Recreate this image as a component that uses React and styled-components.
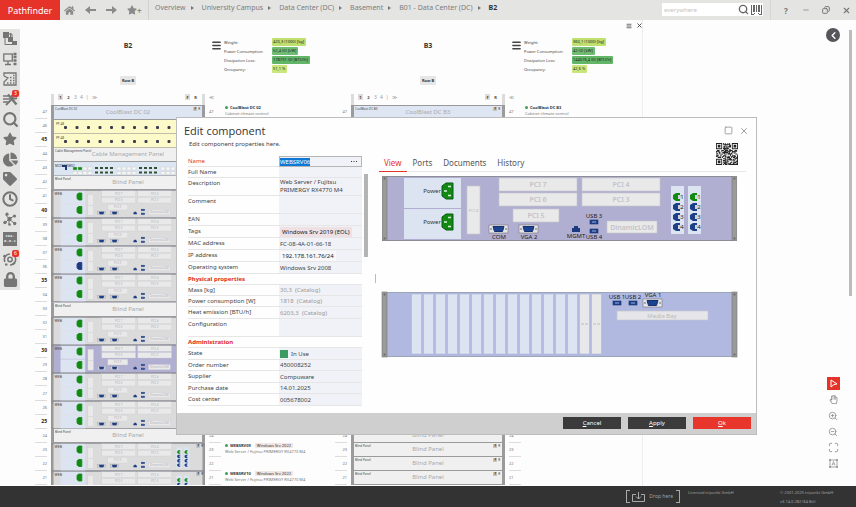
import { useEffect, useRef } from "react";
import styled, { createGlobalStyle } from "styled-components";
import {
    FaHome,
    FaStar,
    FaChartPie,
    FaTag,
    FaLock,
    FaRegHandPaper,
} from "react-icons/fa";
import {
    ChevronLeft,
    Clock,
    Copy,
    Maximize,
    Menu,
    Minus,
    Search,
    Square,
    X,
    ZoomIn,
    ZoomOut,
} from "lucide-react";

const GlobalStyle = createGlobalStyle`
  * {
    box-sizing: border-box;
  }
  body {
    margin: 0;
    background-color: #fdfdfd;
    color: #444;
    font-family: "Noto Sans", "Open Sans", sans-serif;
    font-size: 6px;
  }
  button, input, textarea {
    font: inherit;
    color: inherit;
    border: 0;
    padding: 0;
    margin: 0;
    background: none;
  }
  svg {
    display: block;
  }
`;

const Page = styled.div`
  position: relative;
  display: flex;
  flex-direction: column;
  height: 100vh;
  overflow: hidden;
`;

/* top bar */

const TopBar = styled.header`
  display: flex;
  flex: none;
  height: 20px;
  background-color: #e4e4e2;
`;

const Brand = styled.div`
  width: 60px;
  background-color: #e6332a;
  color: #fff;
  font-size: 9px;
  line-height: 21px;
  text-align: center;
`;

const NavButtons = styled.nav`
  display: flex;
  align-items: center;
  gap: 10px;
  width: 89px;
  padding-left: 4px;
  border-right: 1px solid #d2d2d0;
  color: #8a8a8a;
  font-size: 8px;
  font-weight: bold;
`;

const IconButton = styled.button`
  display: flex;
  align-items: center;
  justify-content: center;
  min-width: 10px;
`;

const Crumbs = styled.div`
  display: flex;
  flex: 1;
  padding-left: 6px;
  font-size: 7px;
  line-height: 15px;
  white-space: nowrap;
  a {
    color: #7d7d7d;
    text-decoration: none;
  }
  a::after {
    content: "";
    display: inline-block;
    margin: 0 8px 0 5px;
    border: 2px solid transparent;
    border-left: 3px solid #777;
    border-right: 0;
  }
  strong {
    color: #333;
  }
`;

const SearchBox = styled.label`
  display: flex;
  align-items: center;
  gap: 2px;
  width: 101px;
  height: 13px;
  margin: 3px 7px 0 0;
  padding: 0 1px 0 2px;
  background-color: #fff;
  color: #666;
  input {
    flex: 1;
    min-width: 0;
    font-size: 6px;
    outline: none;
  }
  input::placeholder {
    color: #c2c2c2;
  }
`;

const WindowButtons = styled.div`
  display: flex;
  align-items: center;
  gap: 10px;
  padding: 0 5px 0 10px;
  border-left: 1px solid #d6d6d4;
  color: #777;
  font-size: 8px;
`;

/* left icon bar */

const Main = styled.main`
  display: flex;
  flex: 1;
  min-height: 0;
`;

const SideBar = styled.aside`
  display: flex;
  flex-direction: column;
  align-self: flex-start;
  width: 20px;
  margin-top: 9px;
  padding-bottom: 1px;
  background-color: #e4e4e2;
  color: #757575;
`;

const SideItem = styled.button`
  position: relative;
  display: flex;
  align-items: center;
  justify-content: center;
  height: 20px;
`;

const Badge = styled.span`
  position: absolute;
  top: 1px;
  right: 1px;
  width: 7px;
  height: 7px;
  border-radius: 2px;
  background-color: #e6332a;
  color: #fff;
  font-size: 5px;
  line-height: 7px;
`;

const AddressIcon = styled.span`
  width: 14px;
  height: 14px;
  padding-top: 2px;
  background-color: #757575;
  color: #eee;
  font-family: "Liberation Mono", monospace;
  font-size: 4px;
  font-weight: bold;
  line-height: 5px;
  text-align: center;
`;

/* rack canvas */

const Canvas = styled.section`
  display: flex;
  flex: none;
  width: 623px;
  padding-left: 15px;
  overflow: hidden;
  border-right: 1px solid #eeeeee;
`;

const Section = styled.article`
  display: flex;
  flex: none;
  flex-direction: column;
  width: 300px;
`;

const SectionTop = styled.div`
  display: flex;
  height: 74px;
  padding: 17px 0 0 16px;
`;

const RackTitle = styled.div`
  display: flex;
  flex-direction: column;
  align-items: center;
  justify-content: space-between;
  width: 154px;
  padding-bottom: 9px;
  h2 {
    margin: 0;
    color: #333;
    font-size: 7px;
    line-height: 18px;
  }
  span {
    padding: 0 2px;
    border-radius: 1px;
    background-color: #e6e6e6;
    color: #333;
    font-size: 4px;
    font-weight: bold;
    line-height: 9px;
  }
`;

const MenuButton = styled.button`
  align-self: flex-start;
  margin: 3px 2px 0 6px;
`;

const Stats = styled.dl`
  display: grid;
  grid-template-columns: 48px auto;
  grid-auto-rows: 9px;
  align-content: start;
  margin: 1px 0 0;
  font-size: 4px;
  line-height: 9px;
  white-space: nowrap;
  dt {
    color: #444;
  }
  dd {
    display: flex;
    margin: 0;
  }
`;

const StatValue = styled.span`
  height: 8px;
  padding: 0 2px 0 1px;
  border-radius: 1px;
  background-color: ${(props) => props.$color};
  color: #222;
  line-height: 8px;
`;

const RackGrid = styled.div`
  display: grid;
  grid-template-columns: 12px 154px 12px 1fr;
  column-gap: 4px;
`;

const RackTools = styled(RackGrid)`
  height: 11px;
  color: #999;
  font-size: 5px;
  line-height: 7px;
`;

const RackHead = styled.div`
  grid-column: 2;
  display: flex;
  justify-content: space-between;
  border: 0 solid #dcdcdc;
  border-width: 0 3px;
  padding: 0 4px;
  div {
    display: flex;
    gap: 3px;
  }
  b {
    width: 5px;
    color: #444;
    font-size: 4px;
    text-align: center;
  }
  b:first-child {
    height: 6px;
    background-color: #ddd;
  }
`;

const RackBody = styled(RackGrid)`
  grid-template-rows: minmax(0, 1fr);
  flex: 1;
  min-height: 0;
  padding-bottom: 1px;
`;

const UnitRows = styled.div`
  display: grid;
  grid-template-rows: repeat(27, minmax(0, 1fr));
  min-height: 0;
`;

const RulerCell = styled.span`
  display: flex;
  align-items: center;
  justify-content: ${(props) => (props.$right ? "flex-start" : "flex-end")};
  border-bottom: 1px solid #dcdcdc;
  color: ${(props) => (props.$major ? "#222" : "#777")};
  font-size: ${(props) => (props.$major ? 5 : 4)}px;
  font-weight: ${(props) => (props.$major ? "bold" : "normal")};
  line-height: 7px;
`;

const Rack = styled(UnitRows)`
  border-top: 1px solid #999;
`;

const Unit = styled.div`
  position: relative;
  grid-row: span ${(props) => props.$span || 1};
  border: 0 solid #9b9b9b;
  border-width: ${(props) => (props.$span || props.$bare ? "0" : "0 3px 1px")};
  background-color: ${(props) => props.$color || "#f0f0f0"};
  color: #a9a9a9;
  font-size: 6px;
  line-height: 13px;
  text-align: center;
  overflow: hidden;
`;

const UnitName = styled.small`
  position: absolute;
  top: 1px;
  left: 1px;
  color: #444;
  font-size: 3px;
  line-height: 4px;
`;

const UnitSide = styled.small`
  position: absolute;
  top: 1px;
  right: 2px;
  color: #333;
  font-size: 3px;
  line-height: 4px;
  b {
    display: inline-block;
    margin-right: 1px;
    padding: 0 1px;
    background-color: #c4c4c4;
  }
`;

const Notes = styled(UnitRows)`
  white-space: nowrap;
`;

const Note = styled.div`
  grid-row: ${(props) => props.$row};
  color: #777;
  font-size: 4px;
  line-height: 5px;
  div {
    display: flex;
    align-items: center;
    gap: 2px;
  }
  div::before {
    content: "";
    width: 3px;
    height: 3px;
    border-radius: 50%;
    background-color: #3c9c5c;
  }
  b {
    color: #333;
  }
  span {
    margin-left: 2px;
    padding: 0 2px;
    background-color: #f2e6e4;
    color: #333;
  }
  p {
    margin: 1px 0 0;
  }
`;

/* area on the right */

const SidePane = styled.section`
  display: flex;
  flex: 1;
  justify-content: flex-end;
  padding-top: 8px;
`;

const Tools = styled.div`
  display: flex;
  flex-direction: column;
  align-items: center;
  justify-content: space-between;
  width: 14px;
  margin-right: 9px;
  padding-bottom: 16px;
  color: #909090;
  > div {
    display: flex;
    flex-direction: column;
    gap: 3px;
  }
`;

const BackButton = styled(IconButton)`
  width: 14px;
  height: 14px;
  border-radius: 50%;
  background-color: #55555a;
  color: #fff;
`;

const ToolButton = styled(IconButton)`
  width: 13px;
  height: 13px;
  background-color: ${(props) => (props.$active ? "#e6332a" : "transparent")};
  color: ${(props) => (props.$active ? "#fff" : "#909090")};
`;

const PageScroll = styled.div`
  width: 3px;
  height: 58%;
  margin: 2px 4px 0 0;
  background-color: #bcbcba;
`;

const PanelButtons = styled.div`
  position: absolute;
  top: 22px;
  left: 624px;
  display: flex;
  color: #444;
`;

/* status bar */

const StatusBar = styled.footer`
  display: flex;
  flex: none;
  justify-content: flex-end;
  gap: 8px;
  height: 21px;
  background-color: #333;
  color: #a0a0a0;
  font-size: 4px;
  line-height: 9px;
  p {
    width: 84px;
    margin: 2px 0 0;
  }
  p:last-child {
    width: 76px;
  }
`;

const DropArea = styled.div`
  display: flex;
  align-items: center;
  gap: 4px;
  height: 13px;
  margin-top: 4px;
  padding: 0 6px 0 5px;
  background:
    linear-gradient(#aaa, #aaa) 0 0 / 3px 1px,
    linear-gradient(#aaa, #aaa) 0 100% / 3px 1px,
    linear-gradient(#aaa, #aaa) 100% 0 / 3px 1px,
    linear-gradient(#aaa, #aaa) 100% 100% / 3px 1px;
  background-repeat: no-repeat;
  border: 1px solid #aaa;
  border-width: 0 1px;
  font-size: 5px;
`;

/* dialog */

const Dialog = styled.section`
  position: absolute;
  top: 117px;
  right: 99px;
  bottom: 72px;
  left: 176px;
  display: flex;
  flex-direction: column;
  border: 1px solid #bdbdbd;
  background-color: #fefefe;
`;

const DialogHead = styled.header`
  display: flex;
  justify-content: space-between;
  height: 38px;
  padding: 5px 7px 0 7px;
  h1 {
    margin: 0;
    color: #333;
    font-family: "Open Sans", sans-serif;
    font-size: 11px;
    font-weight: normal;
    line-height: 16px;
  }
  p {
    margin: 0 0 0 5px;
    line-height: 10px;
  }
`;

const DialogButtons = styled.div`
  display: flex;
  align-items: flex-start;
  gap: 6px;
  padding-top: 3px;
  color: #8a8a8a;
`;

const QrCode = styled.svg`
  position: absolute;
  top: 25px;
  right: 18px;
  width: 22px;
  height: 22px;
`;

const DialogBody = styled.div`
  display: flex;
  flex: 1;
  min-height: 0;
  padding: 0 10px 0 11px;
`;

const Form = styled.form`
  flex: none;
  width: 174px;
  h3 {
    height: 11px;
    margin: 0;
    color: #e02b20;
    font-size: 6px;
    line-height: 11px;
    border-bottom: 1px solid #e6e6e6;
  }
`;

const rowHeights = { compact: 11, normal: 12, tall: 18 };

const Row = styled.div`
  display: grid;
  grid-template-columns: 91px 83px;
  height: ${(props) => rowHeights[props.$size]}px;
  border-bottom: 1px solid #e6e6e6;
  line-height: 10px;
  label {
    color: ${(props) => (props.$required ? "#e0402f" : "#444")};
  }
  input, textarea {
    min-width: 0;
    padding-left: 1px;
    color: ${(props) => (props.$muted ? "#999" : "#444")};
    line-height: 8px;
    outline: none;
    resize: none;
    overflow: hidden;
  }
`;

const Value = styled.div`
  display: flex;
  align-items: center;
  gap: 2px;
  background-color: #f1f2f7;
  white-space: nowrap;
  input, textarea {
    flex: 1;
    height: 100%;
  }
`;

const NameValue = styled(Value)`
  height: 11px;
  border: 1px solid #b5b5b5;
  input {
    padding-left: 0;
  }
  input::selection {
    background-color: #0f78d4;
    color: #fff;
  }
  button {
    width: 10px;
    color: #333;
  }
`;

const Chip = styled.span`
  margin-left: 1px;
  padding: 0 2px;
  background-color: ${(props) => props.$color};
  color: #222;
  line-height: 10px;
`;

const StateMark = styled.i`
  width: 8px;
  height: 8px;
  margin-left: 1px;
  background-color: #3a9c62;
`;

const FormScroll = styled.div`
  flex: none;
  width: 4px;
  height: 83px;
  margin: 18px 7px 0 2px;
  background-color: #b4b4b4;
`;

const Splitter = styled.div`
  flex: none;
  align-self: center;
  width: 1px;
  height: 9px;
  margin: 0 3px 12px 0;
  background-color: #bbb;
`;

const Views = styled.div`
  flex: 1;
  min-width: 0;
`;

const Tabs = styled.div`
  display: flex;
  gap: 1px;
  height: 16px;
  border-bottom: 1px solid #e8e8e8;
`;

const Tab = styled.button`
  height: 16px;
  padding: 0 5px 2px;
  border-bottom: 1px solid ${(props) => (props.$active ? "#e6332a" : "transparent")};
  color: ${(props) => (props.$active ? "#e6332a" : "#555")};
  font-size: 8px;
  line-height: 12px;
`;

const Devices = styled.div`
  display: flex;
  flex-direction: column;
  gap: 51px;
  padding: 4px 9px 0 3px;
`;

const DialogFoot = styled.footer`
  display: flex;
  justify-content: flex-end;
  gap: 7px;
  height: 21px;
  padding: 4px 5px;
  background-color: #cfcfcf;
`;

const ActionButton = styled.button`
  width: 58px;
  height: 12px;
  background-color: ${(props) => (props.$primary ? "#e8362c" : "#3b3b3b")};
  color: #fff;
  font-size: 6px;
  line-height: 12px;
`;

const DeviceSvg = styled.svg`
  width: 100%;
  height: auto;
  font-family: "Noto Sans", sans-serif;
  text-anchor: middle;
`;

const PciSlot = ({ x, y, width, height = 13, label }) => (
    <g>
        <rect x={x} y={y} width={width} height={height} fill="#e9e9ea" stroke="#c6c6cc" strokeWidth="0.6" />
        <text x={x + width / 2} y={y + height / 2 + 2.5} fontSize="7" fontWeight="600" fill="#c3c3c8">{label}</text>
    </g>
);

const PowerPlug = ({ y, color = "#108a10", small }) => (
    <g>
        <path
            d={`M64 ${y} h7 v16 h-7 l-4 -3 v-10 z`}
            fill={color}
            stroke={small ? color : "#0a5a14"}
            strokeWidth={small ? 2 : 1}
        />
        {!small && (
            <path d={`M66 ${y + 3.5} h3 M62 ${y + 8} h3 M66 ${y + 12.5} h3`} stroke="#dff0df" strokeWidth="1.4" />
        )}
    </g>
);

const VgaPort = ({ x, y }) => (
    <g>
        <rect x={x} y={y} width="19" height="8" fill="#e6e6ea" stroke="#777" strokeWidth="0.6" />
        <path d={`M${x + 4} ${y + 1.5} h11 l-1.5 5 h-8 z`} fill="#1d4390" stroke="#14306e" />
        <circle cx={x + 2} cy={y + 4} r="0.8" fill="#555" />
        <circle cx={x + 17} cy={y + 4} r="0.8" fill="#555" />
    </g>
);

const UsbPort = ({ x, y }) => (
    <g>
        <rect x={x} y={y} width="8" height="4" fill="#1d4390" stroke="#142f68" strokeWidth="0.6" />
        <path d={`M${x + 2} ${y + 2} h4`} stroke="#b9c8e8" strokeWidth="0.8" />
    </g>
);

const Flanges = () => (
    <g>
        <rect x="0" y="0" width="5" height="65" fill="#9a9a9a" stroke="#777" strokeWidth="0.6" />
        <rect x="350" y="0" width="5" height="65" fill="#9a9a9a" stroke="#777" strokeWidth="0.6" />
        {[2, 352].map((x) => (
            <g key={x} fill="#666">
                <circle cx={x + 0.5} cy="2.5" r="1" />
                <circle cx={x + 0.5} cy="62.5" r="1" />
            </g>
        ))}
    </g>
);

const ServerFront = ({ color = "#dbdbdb", small, name, lowerPlug }) => (
    <DeviceSvg viewBox="0 0 355 65">
        <rect width="355" height="65" fill={color} />
        <path d="M0 0.5 H355 M0 64.5 H355" stroke="#8d8d96" strokeWidth={small ? 3 : 1} />
        <rect x="22" y="2" width="57" height="30" fill="#dce4f1" />
        <rect x="22" y="33" width="57" height="30" fill="#dce4f1" />
        {small && <text x="8" y="11" fontSize="8" fill="#444" textAnchor="start">{name}</text>}
        {!small && (
            <g fontSize="6" fill="#333">
                <text x="50" y="17">Power</text>
                <text x="50" y="48">Power</text>
            </g>
        )}
        <PowerPlug y={7} small={small} />
        <PowerPlug y={38} small={small} color={lowerPlug} />
        <rect x="85" y="10" width="13" height="48" fill="#e9e9ea" stroke="#c6c6cc" strokeWidth="0.6" />
        <text x="91.5" y="36" fontSize="4" fill="#bbb">PCI 8</text>
        <PciSlot x={117} y={2} width={78} label="PCI 7" />
        <PciSlot x={117} y={17} width={78} label="PCI 6" />
        <PciSlot x={131} y={33} width={46} label="PCI 5" />
        <PciSlot x={200} y={2} width={78} label="PCI 4" />
        <PciSlot x={200} y={17} width={78} label="PCI 3" />
        <PciSlot x={225} y={45} width={50} height={12} label="DinamicLOM" />
        <VgaPort x={107} y={49} />
        <VgaPort x={137} y={49} />
        <path d="M190 56 v-4 h2 v-2 h4 v2 h2 v4 z" fill="#1d3a80" />
        <UsbPort x={208} y={44} />
        <UsbPort x={208} y={53} />
        {!small && (
            <g fontSize="6" fill="#222">
                <text x="117" y="63">COM</text>
                <text x="147" y="63">VGA 2</text>
                <text x="194" y="62">MGMT</text>
                <text x="212" y="42">USB 3</text>
                <text x="212" y="63">USB 4</text>
            </g>
        )}
        {[289, 306].map((x) => (
            <g key={x}>
                <rect x={x} y="10" width="13" height="48" fill="#dce4f1" />
                {[1, 2, 3, 4].map((n) => (
                    <g key={n}>
                        <path
                            d={`M${x + 9} ${n * 10 + 7} v8 h-4 l-3 -2 v-4 l3 -2 z`}
                            fill={n === 1 ? "#108a10" : "#1d3f88"}
                        />
                        <rect x={x + 7} y={n * 10 + 9} width="3" height="4" fill="#cfd4dd" />
                        {!small && <text x={x + 11} y={n * 10 + 13} fontSize="6" fill="#222">{n}</text>}
                    </g>
                ))}
            </g>
        ))}
        <Flanges />
    </DeviceSvg>
);

const ServerRear = () => (
    <DeviceSvg viewBox="0 0 355 65" overflow="visible">
        <rect width="355" height="65" fill="#b1b9e0" />
        <path d="M0 0.5 H355 M0 64.5 H355" stroke="#9aa5b8" />
        {Array.from({ length: 16 }, (_, i) => (
            <g key={i}>
                <rect
                    x={29.5 + i * 12}
                    y="2"
                    width="10"
                    height="60"
                    fill={i < 14 ? "#dce4f2" : "#e8e8ea"}
                    stroke="#a9b4cc"
                    strokeWidth="0.5"
                />
                {i > 13 && <path d={`M${31 + i * 12} 32 h8`} stroke="#bdbdbd" strokeDasharray="3 1" />}
            </g>
        ))}
        <g fontSize="6" fill="#222">
            <text x="235" y="7">USB 1</text>
            <text x="251" y="7">USB 2</text>
            <text x="271" y="5">VGA 1</text>
        </g>
        <UsbPort x={231} y={9} />
        <UsbPort x={247} y={9} />
        <VgaPort x={261} y={7} />
        <rect x="235" y="19" width="91" height="9" fill="#e6e6e8" stroke="#c6c6cc" strokeWidth="0.6" />
        <text x="280" y="26" fontSize="6" fill="#bbb">Media Bay</text>
        <Flanges />
    </DeviceSvg>
);

const PatchPanel = () => (
    <DeviceSvg viewBox="0 0 154 14">
        <rect width="154" height="14" fill="#fcfac8" />
        {Array.from({ length: 12 }, (_, i) => (
            <rect key={i} x={13 + i * 11.5} y="6" width="3" height="3" rx="1" fill="#3c3c50" />
        ))}
        <text x="5" y="4.5" fontSize="3" fill="#444" textAnchor="start">PP-48</text>
        <path d="M0 13.7 H154" stroke="#8f8f8f" strokeWidth="0.7" />
        <rect width="3" height="14" fill="#9b9b9b" />
        <rect x="151" width="3" height="14" fill="#9b9b9b" />
    </DeviceSvg>
);

const Switch = () => (
    <DeviceSvg viewBox="0 0 154 14">
        <rect width="154" height="14" fill="#dce6f3" />
        <path d="M11 3 h5 v5 h-2 v-3 h-3 z" fill="#1d3a80" />
        <text x="4" y="4.5" fontSize="3" fill="#333" textAnchor="start">MCDS02SW02</text>
        {Array.from({ length: 24 }, (_, i) => {
            const x = 22 + i * 5 + Math.floor(i / 4) * 2;
            const used = Math.floor(i / 4) % 2 === 1;
            return (
                <g key={i} fill={used ? "#33502f" : "#f7f7f4"} stroke={used ? "none" : "#c5c9cc"} strokeWidth="0.4">
                    <rect x={x} y="5" width={used ? 3 : 4} height={used ? 2 : 3} fill={i < 2 ? "#108a10" : undefined} />
                    <rect x={x} y="9.5" width={used ? 3 : 4} height={used ? 2 : 3} />
                </g>
            );
        })}
        <path d="M0 13.7 H154" stroke="#8f8f8f" strokeWidth="0.7" />
        <rect width="3" height="14" fill="#9b9b9b" />
        <rect x="151" width="3" height="14" fill="#9b9b9b" />
    </DeviceSvg>
);

const finder = (x, y) => {
    const ring = Math.max(Math.abs(x - 3), Math.abs(y - 3));
    return ring === 3 || ring <= 1;
};

const qrCells = [];
for (let y = 0; y < 25; y++) {
    for (let x = 0; x < 25; x++) {
        let on = (x * 7 + y * 13 + x * y * 3 + ((x * x) ^ (y * 5))) % 5 < 3;
        if (x < 8 && y < 8) on = x < 7 && y < 7 && finder(x, y);
        if (x > 16 && y < 8) on = x > 17 && y < 7 && finder(x - 18, y);
        if (x < 8 && y > 16) on = x < 7 && y > 17 && finder(x, y - 18);
        if (on) qrCells.push(`M${x} ${y}h1v1h-1z`);
    }
}

const numbers = Array.from({ length: 27 }, (_, i) => 47 - i);

const RackRuler = ({ right }) => (
    <UnitRows>
        {numbers.map((n) => (
            <RulerCell key={n} $right={right} $major={!right && n % 5 === 0}>{n}</RulerCell>
        ))}
    </UnitRows>
);

const RackSection = ({ title, stats, notes, children }) => (
    <Section>
        <SectionTop>
            <RackTitle>
                <h2>{title}</h2>
                <span>Row B</span>
            </RackTitle>
            <MenuButton aria-label="Menu">
                <Menu size={11} strokeWidth={3} />
            </MenuButton>
            <Stats>
                {stats.map(([label, value, color]) => [
                    <dt key={label}>{label}</dt>,
                    <dd key={label + "v"}>
                        <StatValue $color={color}>{value}</StatValue>
                    </dd>,
                ])}
            </Stats>
        </SectionTop>
        <RackTools>
            <RackHead>
                <div>
                    <b>1</b>
                    <b>2</b>
                    <span>3</span>
                    <span>4</span>
                    <span>|</span>
                    <span>≫</span>
                </div>
                <div>
                    <b>F</b>
                    <b>R</b>
                </div>
            </RackHead>
            <span>≪</span>
        </RackTools>
        <RackBody>
            <RackRuler />
            <Rack>{children}</Rack>
            <RackRuler right />
            <Notes>
                {notes.map(([row, name, text, tag]) => (
                    <Note key={name} $row={row}>
                        <div>
                            <b>{name}</b>
                            {tag && <span>{tag}</span>}
                        </div>
                        <p>{text}</p>
                    </Note>
                ))}
            </Notes>
        </RackBody>
    </Section>
);

const Side = () => <UnitSide><b>F</b>R</UnitSide>;

const BlindPanel = () => (
    <Unit>
        <UnitName>Blind Panel</UnitName>
        Blind Panel
        <Side />
    </Unit>
);

const RackServer = (props) => (
    <Unit $span={2}>
        <ServerFront small name="WEB" {...props} />
        <Side />
    </Unit>
);

const ArrowIcon = ({ back }) => (
    <svg width="11" height="10" viewBox="0 0 11 10" fill="currentColor">
        <path d={back ? "M0 5 L5 1 V4 H11 V6 H5 V9 Z" : "M11 5 L6 1 V4 H0 V6 H6 V9 Z"} />
    </svg>
);

const NetworkIcon = () => (
    <svg width="14" height="14" viewBox="0 0 14 14" fill="currentColor" stroke="currentColor">
        <path d="M6 7 L3 3 M6 7 L11 4 M6 7 L2 11 M6 7 L11 11 M6 7 V12" strokeWidth="1" />
        <g stroke="none">
            <circle cx="6.5" cy="7" r="2.2" />
            <circle cx="4" cy="2.2" r="1.6" />
            <circle cx="11.5" cy="4" r="1.6" />
            <circle cx="2" cy="10.5" r="1.7" />
            <circle cx="11.7" cy="11.5" r="1.7" />
            <circle cx="6.5" cy="12.5" r="1.3" />
        </g>
    </svg>
);

const TreeIcon = () => (
    <svg width="14" height="14" viewBox="0 0 14 14" fill="currentColor">
        <path d="M0 0h6v6h-6z M5 5h5v5h-5z M9 9h5v4h-5z M7 1h1v4h-1z" />
        <path d="M2 6 V12.5 H9 M6 2 H9 V5" fill="none" stroke="currentColor" />
    </svg>
);

const ComputerIcon = () => (
    <svg width="14" height="14" viewBox="0 0 14 14" fill="none" stroke="currentColor">
        <rect x="0.8" y="2" width="8.5" height="7" strokeWidth="1.3" />
        <path d="M5 9 V12 M2 12.5 H8" strokeWidth="1.3" />
        <path d="M10.5 2 H13.5 M10.5 5 H13.5 M10.5 8.5 H13.5 M10.5 12 H13.5" strokeWidth="2.4" />
    </svg>
);

const PlanIcon = () => (
    <svg width="14" height="14" viewBox="0 0 14 14" fill="none" stroke="currentColor">
        <path d="M1 4 V1 H13 V13 H1 V10 L5 6 L1 4" strokeWidth="1.3" />
        <path d="M7 5.5 H8.5 M10 3.5 H11.5 M10 6 H11.5 M7 8.5 H8.5 M10 8.5 H11.5 M4 11 H5.5 M7 11 H8.5 M10 11 H11.5" strokeWidth="1.7" />
    </svg>
);

const ToolsIcon = () => (
    <svg width="15" height="14" viewBox="0 0 15 14" fill="none" stroke="currentColor">
        <path d="M0 4 H5 M0 7 H7 M0 10 H6" strokeWidth="1.5" />
        <path d="M5 2.5 L13.5 12.5" strokeWidth="2.4" />
        <path d="M3 13 L10 6" strokeWidth="1.8" />
        <path d="M9 3 C8.5 6 10.5 7.5 14 6" strokeWidth="2" />
    </svg>
);

const CycleIcon = () => (
    <svg width="14" height="14" viewBox="0 0 14 14" fill="none" stroke="currentColor">
        <circle cx="7" cy="7.5" r="2.2" strokeWidth="1.5" />
        <path d="M2 10 A5.5 5.5 0 0 1 7 2 M12 5 A5.5 5.5 0 0 1 7 13" strokeWidth="1.6" />
        <path d="M0.5 5 L2 3 M2 12.5 H4.5 M9.5 12.5 L12 10.5" strokeWidth="2" />
    </svg>
);

const BarcodeIcon = () => (
    <svg width="11" height="10" viewBox="0 0 11 10" fill="#666">
        <path d="M0 0h1v10h-1z M2 0h2v7h-2z M5 0h1v7h-1z M7 0h2v7h-2z M10 0h1v10h-1z M0 9h3v1h-3z M8 9h3v1h-3z M3 8h1v1h-1z M7 8h1v1h-1z" />
    </svg>
);

const sideItems = [
    { name: "Structure", icon: <TreeIcon /> },
    { name: "Workplaces", icon: <ComputerIcon /> },
    { name: "Floor plan", icon: <PlanIcon /> },
    { name: "Tasks", icon: <ToolsIcon />, badge: 3 },
    { name: "Search", icon: <Search size={17} strokeWidth={3} /> },
    { name: "Favorites", icon: <FaStar size={14} /> },
    { name: "Reports", icon: <FaChartPie size={15} /> },
    { name: "Tags", icon: <FaTag size={14} /> },
    { name: "History", icon: <Clock size={16} strokeWidth={3} /> },
    { name: "Network", icon: <NetworkIcon /> },
    { name: "IP addresses", icon: <AddressIcon>192. 0.0.1</AddressIcon> },
    { name: "Processes", icon: <CycleIcon />, badge: 6 },
    { name: "Permissions", icon: <FaLock size={15} /> },
];

const Field = ({ id, label, value, size = "normal", muted, chip }) => (
    <Row $size={size} $muted={muted}>
        <label htmlFor={id}>{label}</label>
        <Value>
            {chip ? (
                <Chip id={id} $color={chip}>{value}</Chip>
            ) : size === "tall" ? (
                <textarea id={id} defaultValue={value} />
            ) : (
                <input id={id} defaultValue={value} />
            )}
        </Value>
    </Row>
);

const EditDialog = () => {
    const nameInput = useRef(null);

    useEffect(() => {
        nameInput.current.focus();
        nameInput.current.select();
    }, []);

    return (
        <Dialog role="dialog" aria-labelledby="dialog-title">
            <DialogHead>
                <div>
                    <h1 id="dialog-title">Edit component</h1>
                    <p>Edit component properties here.</p>
                </div>
                <DialogButtons>
                    <IconButton aria-label="Maximize"><Square size={9} /></IconButton>
                    <IconButton aria-label="Close"><X size={10} /></IconButton>
                </DialogButtons>
                <QrCode viewBox="0 0 25 25">
                    <path d={qrCells.join("")} fill="#222" />
                </QrCode>
            </DialogHead>
            <DialogBody>
                <Form>
                    <Row $size="compact" $required>
                        <label htmlFor="name">Name</label>
                        <NameValue>
                            <input id="name" ref={nameInput} defaultValue="WEBSRV06" />
                            <button type="button" aria-label="More">
                                <svg width="7" height="3" viewBox="0 0 7 3" fill="currentColor">
                                    <path d="M0 1h1v1h-1z M2.5 1h1v1h-1z M5 1h1v1h-1z" />
                                </svg>
                            </button>
                        </NameValue>
                    </Row>
                    <Field id="full" label="Full Name" size="compact" />
                    <Field id="description" label="Description" size="tall" value={"Web Server / Fujitsu\nPRIMERGY RX4770 M4"} />
                    <Field id="comment" label="Comment" size="tall" />
                    <Field id="ean" label="EAN" />
                    <Field id="tags" label="Tags" value="Windows Srv 2019 (EOL)" chip="#eee0e3" />
                    <Field id="mac" label="MAC address" value="FC-08-4A-01-66-18" />
                    <Field id="ip" label="IP address" value="192.178.161.76/24" chip="#f8f8fa" />
                    <Field id="os" label="Operating system" value="Windows Srv 2008" />
                    <h3>Physical properties</h3>
                    <Field id="mass" label="Mass [kg]" size="compact" value="30,3  (Catalog)" muted />
                    <Field id="power" label="Power consumption [W]" size="compact" value="1818  (Catalog)" muted />
                    <Field id="heat" label="Heat emission [BTU/h]" value="6203,3  (Catalog)" muted />
                    <Field id="config" label="Configuration" size="tall" />
                    <h3>Administration</h3>
                    <Row $size="normal">
                        <label htmlFor="state">State</label>
                        <Value>
                            <StateMark />
                            <input id="state" defaultValue="In Use" />
                        </Value>
                    </Row>
                    <Field id="order" label="Order number" size="compact" value="450008252" />
                    <Field id="supplier" label="Supplier" value="Compuware" />
                    <Field id="purchase" label="Purchase date" size="compact" value="14.01.2025" />
                    <Field id="cost" label="Cost center" value="005678002" />
                </Form>
                <FormScroll />
                <Splitter />
                <Views>
                    <Tabs>
                        <Tab $active>View</Tab>
                        <Tab>Ports</Tab>
                        <Tab>Documents</Tab>
                        <Tab>History</Tab>
                    </Tabs>
                    <Devices>
                        <ServerFront color="#b1afd1" />
                        <ServerRear />
                    </Devices>
                </Views>
            </DialogBody>
            <DialogFoot>
                <ActionButton><u>C</u>ancel</ActionButton>
                <ActionButton><u>A</u>pply</ActionButton>
                <ActionButton $primary><u>O</u>k</ActionButton>
            </DialogFoot>
        </Dialog>
    );
};

const statsB2 = [
    ["Weight:", "420,3 (1000) [kg]", "#bfe06f"],
    ["Power Consumption:", "52,4 (0) [kW]", "#6fbd72"],
    ["Dissipation Loss:", "178791 (0) [BTU/h]", "#63b568"],
    ["Occupancy:", "51,1 %", "#c8e67a"],
];

const statsB3 = [
    ["Weight:", "360,1 (1000) [kg]", "#bfe06f"],
    ["Power Consumption:", "42 (0) [kW]", "#6fbd72"],
    ["Dissipation Loss:", "144076,4 (0) [BTU/h]", "#63b568"],
    ["Occupancy:", "42,6 %", "#c8e67a"],
];

const serverText = "Web Server / Fujitsu PRIMERGY RX4770 M4";

const notesB2 = [
    [1, "CoolBlast DC 02", "Cabinet climate control"],
    [25, "WEBSRV09", serverText, "Windows Srv 2022"],
    [27, "WEBSRV10", serverText, "Windows Srv 2022"],
];

const notesB3 = [[1, "CoolBlast DC B3", "Cabinet climate control"]];

const App = () => (
    <Page>
        <GlobalStyle />
        <TopBar>
            <Brand>Pathfinder</Brand>
            <NavButtons>
                <IconButton aria-label="Home"><FaHome size={11} /></IconButton>
                <IconButton aria-label="Back"><ArrowIcon back /></IconButton>
                <IconButton aria-label="Forward"><ArrowIcon /></IconButton>
                <IconButton aria-label="Add favorite"><FaStar size={10} />+</IconButton>
            </NavButtons>
            <Crumbs>
                <a href="#overview">Overview</a>
                <a href="#campus">University Campus</a>
                <a href="#dc">Data Center (DC)</a>
                <a href="#basement">Basement</a>
                <a href="#b01">B01 - Data Center (DC)</a>
                <strong>B2</strong>
            </Crumbs>
            <SearchBox>
                <input placeholder="everywhere" aria-label="Search" />
                <Search size={11} strokeWidth={3} />
                <BarcodeIcon />
            </SearchBox>
            <WindowButtons>
                <IconButton aria-label="Help"><b>?</b></IconButton>
                <IconButton aria-label="Minimize"><Minus size={8} /></IconButton>
                <IconButton aria-label="Restore">
                    <Copy size={8} strokeWidth={3} transform="scale(-1 1)" />
                </IconButton>
                <IconButton aria-label="Close"><X size={9} strokeWidth={3} /></IconButton>
            </WindowButtons>
        </TopBar>
        <Main>
            <SideBar>
                {sideItems.map((item) => (
                    <SideItem key={item.name} aria-label={item.name}>
                        {item.icon}
                        {item.badge && <Badge>{item.badge}</Badge>}
                    </SideItem>
                ))}
            </SideBar>
            <Canvas>
                <RackSection title="B2" stats={statsB2} notes={notesB2}>
                    <Unit $color="#dfe6f3">
                        <UnitName>CoolBlast DC 02</UnitName>
                        CoolBlast DC 02
                        <Side />
                    </Unit>
                    <Unit $bare><PatchPanel /></Unit>
                    <Unit $bare><PatchPanel /></Unit>
                    <Unit>
                        <UnitName>Cable Management Panel</UnitName>
                        Cable Management Panel
                    </Unit>
                    <Unit $bare><Switch /></Unit>
                    <BlindPanel />
                    <RackServer />
                    <RackServer />
                    <RackServer lowerPlug="#1d3a80" />
                    <RackServer />
                    <BlindPanel />
                    <RackServer />
                    <RackServer color="#b1afd1" />
                    <RackServer />
                    <RackServer />
                    <BlindPanel />
                    <RackServer />
                    <Unit $bare>
                        <ServerFront small name="WEB" />
                        <Side />
                    </Unit>
                </RackSection>
                <RackSection title="B3" stats={statsB3} notes={notesB3}>
                    <Unit $color="#dfe6f3">
                        <UnitName>CoolBlast DC B3</UnitName>
                        CoolBlast DC B3
                        <Side />
                    </Unit>
                    {numbers.slice(1).map((n) => <BlindPanel key={n} />)}
                </RackSection>
            </Canvas>
            <SidePane>
                <Tools>
                    <BackButton aria-label="Collapse"><ChevronLeft size={11} strokeWidth={3} /></BackButton>
                    <div>
                        <ToolButton $active aria-label="Select">
                            <svg width="9" height="9" viewBox="0 0 9 9" fill="none" stroke="currentColor">
                                <path d="M2 1 L8 5 L5 5.5 L2 8 Z" />
                            </svg>
                        </ToolButton>
                        <ToolButton aria-label="Pan"><FaRegHandPaper size={9} /></ToolButton>
                        <ToolButton aria-label="Zoom in"><ZoomIn size={10} /></ToolButton>
                        <ToolButton aria-label="Zoom out"><ZoomOut size={10} /></ToolButton>
                        <ToolButton aria-label="Fit"><Maximize size={11} /></ToolButton>
                        <ToolButton aria-label="Fit selection">
                            <svg width="9" height="9" viewBox="0 0 9 9" fill="none" stroke="currentColor">
                                <rect x="1" y="1" width="7" height="7" strokeWidth="0.8" />
                                <path d="M0 1h2 M7 1h2 M0 8h2 M7 8h2" strokeWidth="1.6" />
                                <path d="M3 6.5 L4.5 2.5 L6 6.5 M3.5 5 H5.5" strokeWidth="0.7" />
                            </svg>
                        </ToolButton>
                    </div>
                </Tools>
                <PageScroll />
            </SidePane>
        </Main>
        <StatusBar>
            <DropArea>
                <svg width="13" height="10" viewBox="0 0 13 10" fill="none" stroke="#aaa">
                    <path d="M4 2.5 H0.5 V9.5 H12.5 V2.5 H9 M6.5 0 V7 M4 4.5 L6.5 7 L9 4.5" />
                </svg>
                Drop here
            </DropArea>
            <p>Licensed tripunkt GmbH</p>
            <p>© 2001-2025 tripunkt GmbH<br />v3.14.0.282 (64 Bit)</p>
        </StatusBar>
        <PanelButtons>
            <IconButton aria-label="List"><Menu size={6} strokeWidth={3} /></IconButton>
            <IconButton aria-label="Close panel"><X size={7} strokeWidth={3} /></IconButton>
        </PanelButtons>
        <EditDialog />
    </Page>
);

export default App;
